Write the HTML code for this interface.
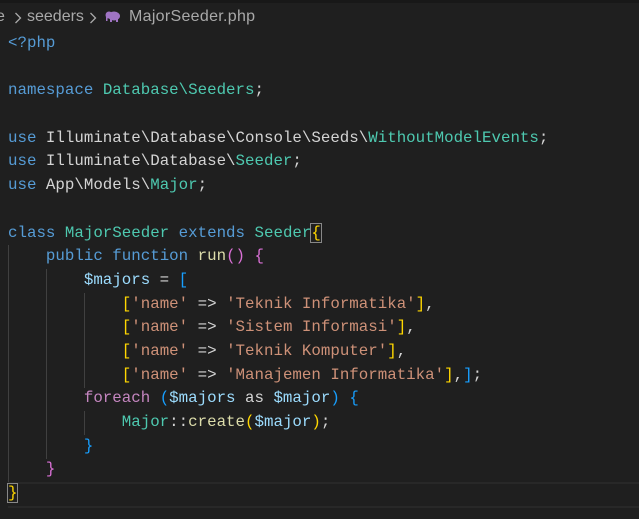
<!DOCTYPE html><html><head><style>
body{margin:0;width:639px;height:519px;background:#1f1f1f;overflow:hidden;position:relative;font-family:"Liberation Mono",monospace}
.top{position:absolute;left:0;top:0;width:639px;height:3px;background:#181818}
.bc{position:absolute;top:8px;font:16px "Liberation Sans",sans-serif;color:#a9a9a9;white-space:pre}
.code{position:absolute;left:8px;top:32px;font-size:15.8px;line-height:23.68px;white-space:pre;color:#d4d4d4}
.k{color:#569cd6}.t{color:#4ec9b0}.s{color:#ce9178}.v{color:#9cdcfe}.f{color:#dcdcaa}.c{color:#c586c0}
.y{color:#ffd700}.p{color:#da70d6}.b{color:#179fff}.w{color:#d4d4d4}
.g{position:absolute;width:1px;background:#404040}
.cur{position:absolute;left:8px;top:482px;width:631px;height:22px;border-top:2px solid #282828;border-bottom:2px solid #282828}
</style></head><body>
<div class="top"></div>
<div class="bc" style="left:-4px">e</div>
<svg style="position:absolute;left:14px;top:12px" width="8" height="12"><path d="M1.5 1 L6.5 6 L1.5 11" stroke="#aaa" stroke-width="1.3" fill="none"/></svg>
<div class="bc" style="left:27px">seeders</div>
<svg style="position:absolute;left:89px;top:12px" width="8" height="12"><path d="M1.5 1 L6.5 6 L1.5 11" stroke="#aaa" stroke-width="1.3" fill="none"/></svg>
<svg style="position:absolute;left:105px;top:11px" width="17" height="12" viewBox="0 0 17 12"><ellipse cx="9" cy="5" rx="6" ry="4.5" fill="#a074c4"/><circle cx="4" cy="4" r="3.5" fill="#a074c4"/><rect x="5" y="7" width="2" height="4" fill="#a074c4"/><rect x="11" y="7" width="2" height="4" fill="#a074c4"/><rect x="1" y="5" width="1.5" height="5" fill="#a074c4"/></svg>
<div class="bc" style="left:129px;letter-spacing:0.3px">MajorSeeder.php</div>
<div class="cur"></div>
<div class="g" style="left:8px;top:245px;height:237px"></div>
<div class="g" style="left:46px;top:269px;height:190px"></div>
<div class="g" style="left:84px;top:293px;height:95px"></div>
<div class="g" style="left:84px;top:411px;height:24px"></div>
<div class="code"><span class="k">&lt;?php</span>

<span class="k">namespace</span> <span class="t">Database\Seeders</span>;

<span class="k">use</span> Illuminate\Database\Console\Seeds\<span class="t">WithoutModelEvents</span>;
<span class="k">use</span> Illuminate\Database\<span class="t">Seeder</span>;
<span class="k">use</span> App\Models\<span class="t">Major</span>;

<span class="k">class</span> <span class="t">MajorSeeder</span> <span class="k">extends</span> <span class="t">Seeder</span><span class="y" style="outline:1px solid #888">{</span>
    <span class="k">public</span> <span class="k">function</span> <span class="f">run</span><span class="p">()</span> <span class="p">{</span>
        <span class="v">$majors</span> = <span class="b">[</span>
            <span class="y">[</span><span class="s">'name'</span> =&gt; <span class="s">'Teknik Informatika'</span><span class="y">]</span>,
            <span class="y">[</span><span class="s">'name'</span> =&gt; <span class="s">'Sistem Informasi'</span><span class="y">]</span>,
            <span class="y">[</span><span class="s">'name'</span> =&gt; <span class="s">'Teknik Komputer'</span><span class="y">]</span>,
            <span class="y">[</span><span class="s">'name'</span> =&gt; <span class="s">'Manajemen Informatika'</span><span class="y">]</span>,<span class="b">]</span>;
        <span class="c">foreach</span> <span class="b">(</span><span class="v">$majors</span> as <span class="v">$major</span><span class="b">)</span> <span class="b">{</span>
            <span class="t">Major</span>::<span class="f">create</span><span class="y">(</span><span class="v">$major</span><span class="y">)</span>;
        <span class="b">}</span>
    <span class="p">}</span>
<span class="y" style="outline:1px solid #888">}</span></div>
</body></html>
